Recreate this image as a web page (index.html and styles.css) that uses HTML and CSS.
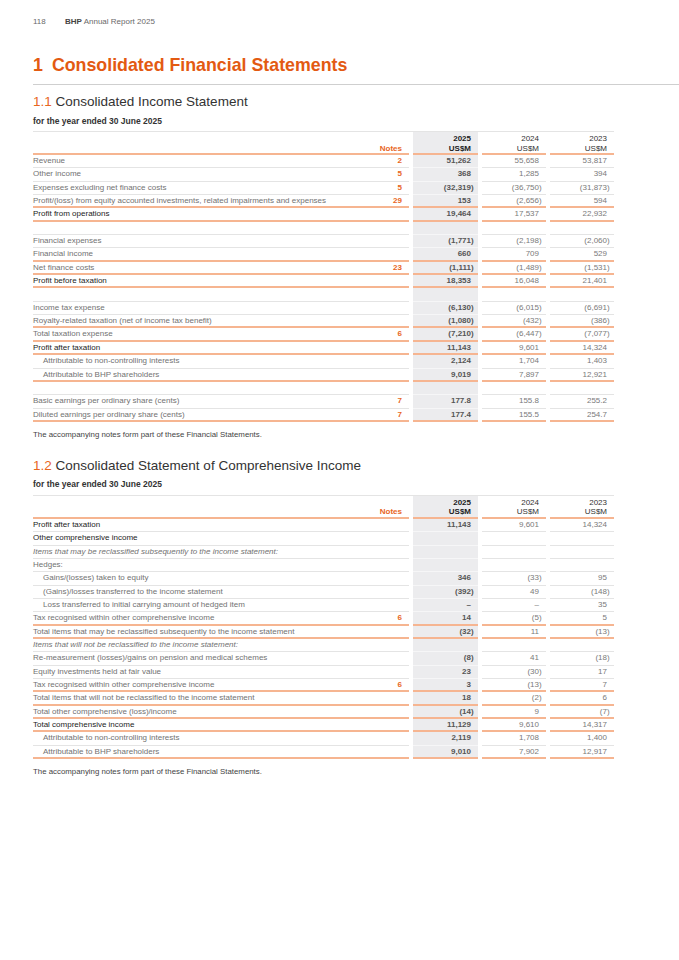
FILE: index.html
```html
<!DOCTYPE html>
<html lang="en">
<head>
<meta charset="utf-8">
<title>BHP Annual Report 2025 – Consolidated Financial Statements</title>
<link rel="stylesheet" href="styles.css">
</head>
<body>
<div class="page">
  <div class="running"><span class="pg">118</span><span><b>BHP</b> Annual Report 2025</span></div>
  <h1 class="title"><span class="num">1</span>Consolidated Financial Statements</h1>

  <h2 class="sec"><span class="sn">1.1</span> Consolidated Income Statement</h2>
  <div class="period">for the year ended 30 June 2025</div>

  <div class="fin">
    <div class="row head">
      <div class="lab"><span></span><span class="note">Notes</span></div>
      <div class="c cy"><b>2025</b><b>US$M</b></div>
      <div class="c"><span class="yr">2024</span><span>US$M</span></div>
      <div class="c"><span class="yr">2023</span><span>US$M</span></div>
    </div>
    <div class="row"><div class="lab"><span>Revenue</span><span class="note">2</span></div><div class="c cy">51,262</div><div class="c">55,658</div><div class="c">53,817</div></div>
    <div class="row"><div class="lab"><span>Other income</span><span class="note">5</span></div><div class="c cy">368</div><div class="c">1,285</div><div class="c">394</div></div>
    <div class="row"><div class="lab"><span>Expenses excluding net finance costs</span><span class="note">5</span></div><div class="c cy">(32,319<span class="cp">)</span></div><div class="c">(36,750<span class="cp">)</span></div><div class="c">(31,873<span class="cp">)</span></div></div>
    <div class="row o"><div class="lab"><span>Profit/(loss) from equity accounted investments, related impairments and expenses</span><span class="note">29</span></div><div class="c cy">153</div><div class="c">(2,656<span class="cp">)</span></div><div class="c">594</div></div>
    <div class="row o strong"><div class="lab"><span>Profit from operations</span></div><div class="c cy">19,464</div><div class="c">17,537</div><div class="c">22,932</div></div>
    <div class="row blank"><div class="lab"></div><div class="c cy"></div><div class="c"></div><div class="c"></div></div>
    <div class="row"><div class="lab"><span>Financial expenses</span></div><div class="c cy">(1,771<span class="cp">)</span></div><div class="c">(2,198<span class="cp">)</span></div><div class="c">(2,060<span class="cp">)</span></div></div>
    <div class="row o"><div class="lab"><span>Financial income</span></div><div class="c cy">660</div><div class="c">709</div><div class="c">529</div></div>
    <div class="row o"><div class="lab"><span>Net finance costs</span><span class="note">23</span></div><div class="c cy">(1,111<span class="cp">)</span></div><div class="c">(1,489<span class="cp">)</span></div><div class="c">(1,531<span class="cp">)</span></div></div>
    <div class="row o strong"><div class="lab"><span>Profit before taxation</span></div><div class="c cy">18,353</div><div class="c">16,048</div><div class="c">21,401</div></div>
    <div class="row blank"><div class="lab"></div><div class="c cy"></div><div class="c"></div><div class="c"></div></div>
    <div class="row"><div class="lab"><span>Income tax expense</span></div><div class="c cy">(6,130<span class="cp">)</span></div><div class="c">(6,015<span class="cp">)</span></div><div class="c">(6,691<span class="cp">)</span></div></div>
    <div class="row o"><div class="lab"><span>Royalty-related taxation (net of income tax benefit)</span></div><div class="c cy">(1,080<span class="cp">)</span></div><div class="c">(432<span class="cp">)</span></div><div class="c">(386<span class="cp">)</span></div></div>
    <div class="row o"><div class="lab"><span>Total taxation expense</span><span class="note">6</span></div><div class="c cy">(7,210<span class="cp">)</span></div><div class="c">(6,447<span class="cp">)</span></div><div class="c">(7,077<span class="cp">)</span></div></div>
    <div class="row o strong"><div class="lab"><span>Profit after taxation</span></div><div class="c cy">11,143</div><div class="c">9,601</div><div class="c">14,324</div></div>
    <div class="row ind"><div class="lab"><span>Attributable to non-controlling interests</span></div><div class="c cy">2,124</div><div class="c">1,704</div><div class="c">1,403</div></div>
    <div class="row o ind"><div class="lab"><span>Attributable to BHP shareholders</span></div><div class="c cy">9,019</div><div class="c">7,897</div><div class="c">12,921</div></div>
    <div class="row blank"><div class="lab"></div><div class="c cy"></div><div class="c"></div><div class="c"></div></div>
    <div class="row"><div class="lab"><span>Basic earnings per ordinary share (cents)</span><span class="note">7</span></div><div class="c cy">177.8</div><div class="c">155.8</div><div class="c">255.2</div></div>
    <div class="row o"><div class="lab"><span>Diluted earnings per ordinary share (cents)</span><span class="note">7</span></div><div class="c cy">177.4</div><div class="c">155.5</div><div class="c">254.7</div></div>
  </div>
  <p class="foot">The accompanying notes form part of these Financial Statements.</p>

  <h2 class="sec sec2"><span class="sn">1.2</span> Consolidated Statement of Comprehensive Income</h2>
  <div class="period">for the year ended 30 June 2025</div>

  <div class="fin">
    <div class="row head">
      <div class="lab"><span></span><span class="note">Notes</span></div>
      <div class="c cy"><b>2025</b><b>US$M</b></div>
      <div class="c"><span class="yr">2024</span><span>US$M</span></div>
      <div class="c"><span class="yr">2023</span><span>US$M</span></div>
    </div>
    <div class="row strong"><div class="lab"><span>Profit after taxation</span></div><div class="c cy">11,143</div><div class="c">9,601</div><div class="c">14,324</div></div>
    <div class="row strong"><div class="lab"><span>Other comprehensive income</span></div><div class="c cy"></div><div class="c"></div><div class="c"></div></div>
    <div class="row it"><div class="lab"><span>Items that may be reclassified subsequently to the income statement:</span></div><div class="c cy"></div><div class="c"></div><div class="c"></div></div>
    <div class="row"><div class="lab"><span>Hedges:</span></div><div class="c cy"></div><div class="c"></div><div class="c"></div></div>
    <div class="row ind"><div class="lab"><span>Gains/(losses) taken to equity</span></div><div class="c cy">346</div><div class="c">(33<span class="cp">)</span></div><div class="c">95</div></div>
    <div class="row ind"><div class="lab"><span>(Gains)/losses transferred to the income statement</span></div><div class="c cy">(392<span class="cp">)</span></div><div class="c">49</div><div class="c">(148<span class="cp">)</span></div></div>
    <div class="row ind"><div class="lab"><span>Loss transferred to initial carrying amount of hedged item</span></div><div class="c cy">–</div><div class="c">–</div><div class="c">35</div></div>
    <div class="row o"><div class="lab"><span>Tax recognised within other comprehensive income</span><span class="note">6</span></div><div class="c cy">14</div><div class="c">(5<span class="cp">)</span></div><div class="c">5</div></div>
    <div class="row o"><div class="lab"><span>Total items that may be reclassified subsequently to the income statement</span></div><div class="c cy">(32<span class="cp">)</span></div><div class="c">11</div><div class="c">(13<span class="cp">)</span></div></div>
    <div class="row it"><div class="lab"><span>Items that will not be reclassified to the income statement:</span></div><div class="c cy"></div><div class="c"></div><div class="c"></div></div>
    <div class="row"><div class="lab"><span>Re-measurement (losses)/gains on pension and medical schemes</span></div><div class="c cy">(8<span class="cp">)</span></div><div class="c">41</div><div class="c">(18<span class="cp">)</span></div></div>
    <div class="row"><div class="lab"><span>Equity investments held at fair value</span></div><div class="c cy">23</div><div class="c">(30<span class="cp">)</span></div><div class="c">17</div></div>
    <div class="row o"><div class="lab"><span>Tax recognised within other comprehensive income</span><span class="note">6</span></div><div class="c cy">3</div><div class="c">(13<span class="cp">)</span></div><div class="c">7</div></div>
    <div class="row o"><div class="lab"><span>Total items that will not be reclassified to the income statement</span></div><div class="c cy">18</div><div class="c">(2<span class="cp">)</span></div><div class="c">6</div></div>
    <div class="row o"><div class="lab"><span>Total other comprehensive (loss)/income</span></div><div class="c cy">(14<span class="cp">)</span></div><div class="c">9</div><div class="c">(7<span class="cp">)</span></div></div>
    <div class="row o strong"><div class="lab"><span>Total comprehensive income</span></div><div class="c cy">11,129</div><div class="c">9,610</div><div class="c">14,317</div></div>
    <div class="row ind"><div class="lab"><span>Attributable to non-controlling interests</span></div><div class="c cy">2,119</div><div class="c">1,708</div><div class="c">1,400</div></div>
    <div class="row o ind"><div class="lab"><span>Attributable to BHP shareholders</span></div><div class="c cy">9,010</div><div class="c">7,902</div><div class="c">12,917</div></div>
  </div>
  <p class="foot">The accompanying notes form part of these Financial Statements.</p>
</div>
</body>
</html>
```

FILE: styles.css
```css
html, body {
  margin: 0;
  padding: 0;
  background: #fff;
}

.page {
  padding: 17px 0 40px 33px;
  font-family: "Liberation Sans", Arial, sans-serif;
  color: #333;
}

.running {
  display: flex;
  font-size: 8px;
  line-height: 10px;
  color: #6a6a6a;
}

.running .pg {
  width: 32px;
}

.running b {
  color: #444;
}

.title {
  margin: 27px 0 0;
  padding-bottom: 8px;
  border-bottom: 1px solid #cfcfcf;
  font-size: 17.8px;
  line-height: 22px;
  font-weight: bold;
  color: #e35a12;
}

.title .num {
  margin-right: 9px;
}

.sec {
  margin: 8px 0 0;
  font-size: 13.5px;
  line-height: 18px;
  font-weight: normal;
  color: #333;
}

.sec .sn {
  color: #e8661e;
}

.sec2 {
  margin-top: 17px;
}

.period {
  margin-top: 4.5px;
  font-size: 8.5px;
  line-height: 10px;
  font-weight: bold;
  color: #333;
}

.fin {
  width: 581px;
  margin-top: 5.5px;
  border-top: 1px solid #e4e4e4;
  font-size: 8px;
}

.row {
  display: grid;
  grid-template-columns: 376px 65px 64px 64px;
  column-gap: 4px;
}

.row > div {
  box-sizing: border-box;
  height: 13.35px;
  line-height: 12.3px;
  border-bottom: 1px solid #e4e4e4;
}

.row.o > div {
  border-bottom: 2px solid #f6b591;
}

.lab {
  display: flex;
  justify-content: space-between;
  padding-right: 7px;
  color: #727272;
  white-space: nowrap;
}

.note {
  color: #e8661e;
  font-weight: bold;
}

.c {
  text-align: right;
  padding-right: 7px;
  color: #7a7a7a;
  white-space: nowrap;
}

.c.cy {
  background: #ececee;
  color: #555;
  font-weight: bold;
}

.row > .c.cy {
  border-bottom-color: #f6f6f7;
}

.row.o > .c.cy {
  border-bottom-color: #f6b591;
}

.cp {
  margin-right: -0.333em;
}

.row.strong .lab {
  color: #1c1c1c;
}

.row.ind .lab {
  padding-left: 10px;
}

.row.it .lab {
  font-style: italic;
}

.row.head > div {
  height: 23px;
  display: flex;
  flex-direction: column;
  justify-content: flex-end;
  padding-bottom: 0;
  line-height: 9.5px;
  border-bottom: 2px solid #f6b591;
}

.row.head > .lab {
  flex-direction: row;
  align-items: flex-end;
}

.row.head .c {
  align-items: flex-end;
  color: #333;
}

.row.head .c.cy {
  color: #1c1c1c;
}

.row.head > .c.cy {
  border-bottom-color: #f6b591;
}

.foot {
  margin: 8px 0 0;
  font-size: 7.85px;
  line-height: 10px;
  color: #444;
}
```
